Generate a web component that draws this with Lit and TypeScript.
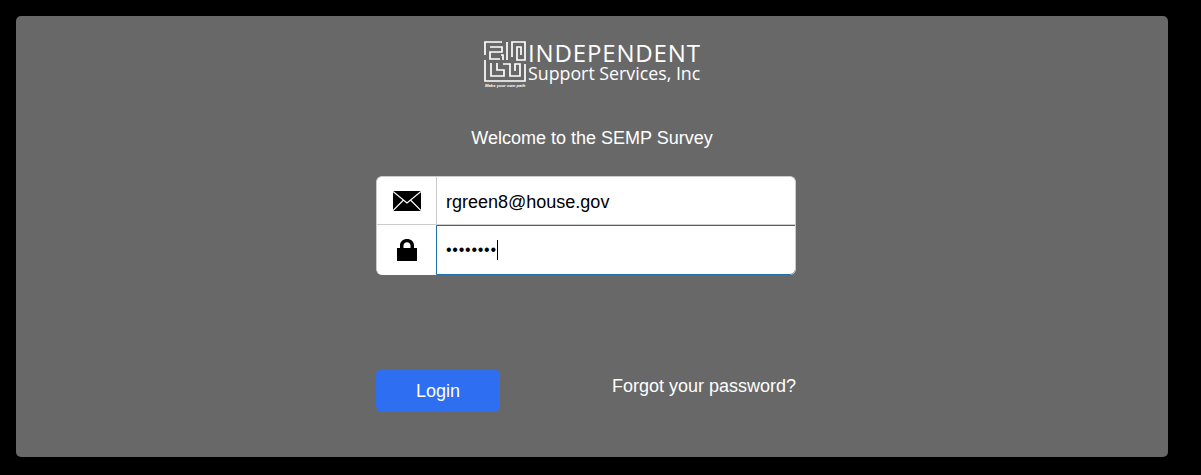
import { LitElement, html, css } from "lit";
import { customElement } from "lit/decorators.js";

@customElement("app-root")
export class AppRoot extends LitElement {
  static styles = css`
    :host { display: block; width: 1201px; height: 475px; box-sizing: border-box; background: #000; padding: 16px 33px 18px 16px; font-family: "Liberation Sans", Arial, sans-serif; overflow: hidden; }
    .panel { height: 441px; background: #686868; border-radius: 5px; display: flex; flex-direction: column; align-items: center; box-sizing: border-box; padding-top: 25px; }
    .logo { display: flex; align-items: flex-start; width: 217px; height: 49px; color: #fff; flex: none; margin-left: 1px; }
    .mark { display: flex; flex-direction: column; width: 44px; flex: none; }
    .mark svg { display: block; }
    .tag { font-family: "Liberation Sans", sans-serif; font-style: italic; font-weight: bold; font-size: 4.2px; line-height: 6px; white-space: nowrap; margin-top: 1px; margin-left: 1px; }
    .names { display: flex; flex-direction: column; }
    .n1 { font-family: "Open Sans", sans-serif; font-size: 24px; line-height: 24px; letter-spacing: 0.85px; white-space: nowrap; height: 23px; }
    .n2 { font-family: "Open Sans", sans-serif; font-size: 17.8px; line-height: 18px; white-space: nowrap; height: 18px; }
    .welcome { margin-top: 38px; color: #fff; font-size: 18px; line-height: 20px; height: 20px; }
    .form { width: 420px; margin-top: 28px; margin-left: -12px; display: flex; flex-direction: column; }
    .group { display: grid; grid-template-columns: 60px 1fr; grid-template-rows: 48px 50px; background: #fff; border: 1px solid #ccc; border-bottom: none; border-radius: 6px; overflow: hidden; box-sizing: border-box; }
    .ic { display: flex; align-items: center; justify-content: center; box-sizing: border-box; border-right: 1px solid #ccc; padding-left: 1px; }
    .ic.top { border-bottom: 1px solid #ccc; }
    .field { box-sizing: border-box; display: flex; align-items: center; padding: 3px 0 0 9px; font-size: 18px; color: #000; }
    .field.top { border-bottom: 1px solid #d0d0d0; }
    .field.focus { border: 1px solid #1f6fa8; border-radius: 0 0 6px 0; padding: 0 0 0 9px; margin-left: -1px; margin-right: -1px; }
    .dots { font-size: 16px; letter-spacing: 0.75px; }
    .caret { display: inline-block; width: 1px; height: 20px; background: #000; }
    .actions { display: flex; justify-content: space-between; align-items: flex-start; margin-top: 94px; }
    .login { width: 124px; height: 43px; border: none; border-radius: 6px; background: #2e6ff2; color: #fff; font: 18px "Liberation Sans", Arial, sans-serif; padding: 2px 0 0; }
    .forgot { color: #fff; font-size: 18px; line-height: 20px; margin-top: 7px; }
  `;

  render() {
    return html`
      <div class="panel">
        <div class="logo">
          <div class="mark">
            <svg width="42" height="41" viewBox="0 0 42 41" fill="none" stroke="#fff" stroke-width="1.7">
              <path d="M1 14V1H18" />
              <path d="M6 6H18V11H6V18H16" />
              <path d="M23 1V19M17 14H19V19" />
              <path d="M28 16V1H41V19H33V6H37V14" />
              <path d="M1 19V40H41V23" />
              <path d="M7 22V35H20V29H13V22" />
              <path d="M19 23H26V35H36V23H31V30" />
            </svg>
            <div class="tag">Make your own path</div>
          </div>
          <div class="names">
            <div class="n1">INDEPENDENT</div>
            <div class="n2">Support Services, Inc</div>
          </div>
        </div>
        <div class="welcome">Welcome to the SEMP Survey</div>
        <div class="form">
          <div class="group">
            <div class="ic top">
              <svg width="28" height="20" viewBox="0 0 28 20"><path fill="#000" d="M0 0H28V20H0Z"/><path fill="none" stroke="#fff" stroke-width="1.2" d="M0 .5 14 12 28 .5M0 19.5 10.500 9M28 19.5 17.500 9"/></svg>
            </div>
            <div class="field top">rgreen8@house.gov</div>
            <div class="ic">
              <svg width="20" height="22" viewBox="0 0 20 22"><path fill="#000" d="M0 9H3V6.500C3 2.500 6 0 10 0S17 2.500 17 6.500V9H20V22H0ZM6.500 9H13.500V6.500C13.500 4.500 12 3.200 10 3.200S6.500 4.500 6.500 6.500Z"/></svg>
            </div>
            <div class="field focus"><span class="dots">••••••••</span><span class="caret"></span></div>
          </div>
          <div class="actions">
            <button class="login">Login</button>
            <div class="forgot">Forgot your password?</div>
          </div>
        </div>
      </div>
    `;
  }
}
